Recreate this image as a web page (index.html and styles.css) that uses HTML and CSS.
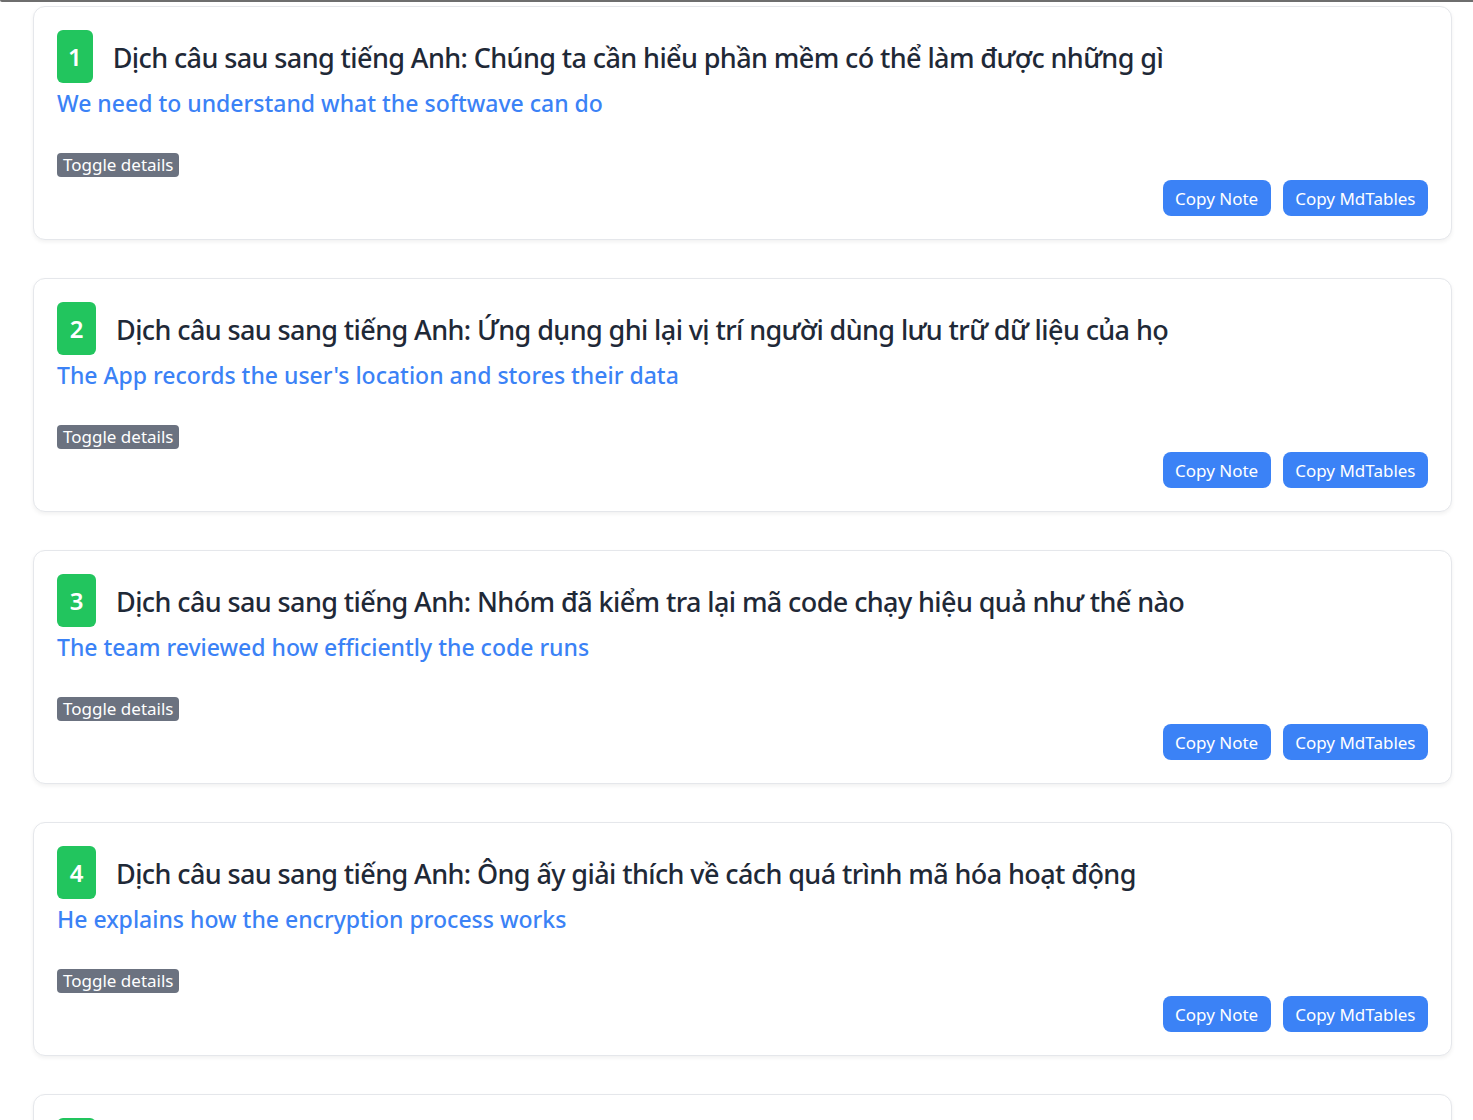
FILE: index.html
```html
<!DOCTYPE html>
<html lang="vi">
<head>
    <meta charset="UTF-8">
    <meta name="viewport" content="width=device-width, initial-scale=1.0">
    <title>Sentence Notes</title>
    <link rel="stylesheet" href="styles.css">
</head>
<body>
    <div class="topbar"></div>
    <div class="list">
        <div class="card">
            <div class="card-head">
                <span class="num num-narrow">1</span>
                <h2 class="prompt">Dịch câu sau sang tiếng Anh: Chúng ta cần hiểu phần mềm có thể làm được những gì</h2>
            </div>
            <p class="answer">We need to understand what the softwave can do</p>
            <span class="toggle">Toggle details</span>
            <div class="actions">
                <button class="btn">Copy Note</button>
                <button class="btn">Copy MdTables</button>
            </div>
        </div>

        <div class="card">
            <div class="card-head">
                <span class="num">2</span>
                <h2 class="prompt">Dịch câu sau sang tiếng Anh: Ứng dụng ghi lại vị trí người dùng lưu trữ dữ liệu của họ</h2>
            </div>
            <p class="answer">The App records the user's location and stores their data</p>
            <span class="toggle">Toggle details</span>
            <div class="actions">
                <button class="btn">Copy Note</button>
                <button class="btn">Copy MdTables</button>
            </div>
        </div>

        <div class="card">
            <div class="card-head">
                <span class="num">3</span>
                <h2 class="prompt">Dịch câu sau sang tiếng Anh: Nhóm đã kiểm tra lại mã code chạy hiệu quả như thế nào</h2>
            </div>
            <p class="answer">The team reviewed how efficiently the code runs</p>
            <span class="toggle">Toggle details</span>
            <div class="actions">
                <button class="btn">Copy Note</button>
                <button class="btn">Copy MdTables</button>
            </div>
        </div>

        <div class="card">
            <div class="card-head">
                <span class="num">4</span>
                <h2 class="prompt">Dịch câu sau sang tiếng Anh: Ông ấy giải thích về cách quá trình mã hóa hoạt động</h2>
            </div>
            <p class="answer">He explains how the encryption process works</p>
            <span class="toggle">Toggle details</span>
            <div class="actions">
                <button class="btn">Copy Note</button>
                <button class="btn">Copy MdTables</button>
            </div>
        </div>

        <div class="card">
            <div class="card-head">
                <span class="num">5</span>
                <h2 class="prompt">Dịch câu sau sang tiếng Anh</h2>
            </div>
        </div>
    </div>
</body>
</html>
```

FILE: styles.css
```css
* {
    margin: 0;
    padding: 0;
    box-sizing: border-box;
    font-family: 'Segoe UI', 'Noto Sans', sans-serif;
}

body {
    background: #fff;
    overflow: hidden;
    height: 1120px;
}

.topbar {
    height: 2px;
    background: #6e6e6e;
    border-radius: 0 0 0 4px;
}

.list {
    display: flex;
    flex-direction: column;
    gap: 38px;
    padding: 4px 21px 0 33px;
}

.card {
    background: #fff;
    border: 1px solid #e5e7eb;
    border-radius: 12px;
    box-shadow: 0 2px 4px rgba(0, 0, 0, 0.06);
    padding: 23px;
}

.card-head {
    display: flex;
    align-items: center;
    gap: 20px;
}

.num {
    display: inline-flex;
    align-items: center;
    justify-content: center;
    height: 53px;
    min-width: 39px;
    padding: 0 11px;
    background: #22c55e;
    color: #fff;
    border-radius: 6px;
    font-size: 24px;
    font-weight: 600;
}

.num-narrow {
    min-width: 35px;
}

.prompt {
    color: #1f2937;
    font-size: 27px;
    font-weight: 500;
    letter-spacing: -0.6px;
    padding-top: 2px;
}

.answer {
    color: #3b82f6;
    font-size: 23px;
    font-weight: 500;
    line-height: 36px;
    margin-top: 2px;
    margin-bottom: 32px;
}

.toggle {
    display: block;
    width: fit-content;
    background: #6b7280;
    color: #fff;
    font-size: 17px;
    line-height: 24px;
    padding: 0 6px;
    border-radius: 4px;
}

.actions {
    display: flex;
    justify-content: flex-end;
    gap: 12px;
    margin-top: 3px;
}

.btn {
    background: #3b82f6;
    color: #fff;
    border: none;
    border-radius: 8px;
    height: 36px;
    padding: 0 12.5px;
    font-size: 17px;
    cursor: pointer;
}
```
